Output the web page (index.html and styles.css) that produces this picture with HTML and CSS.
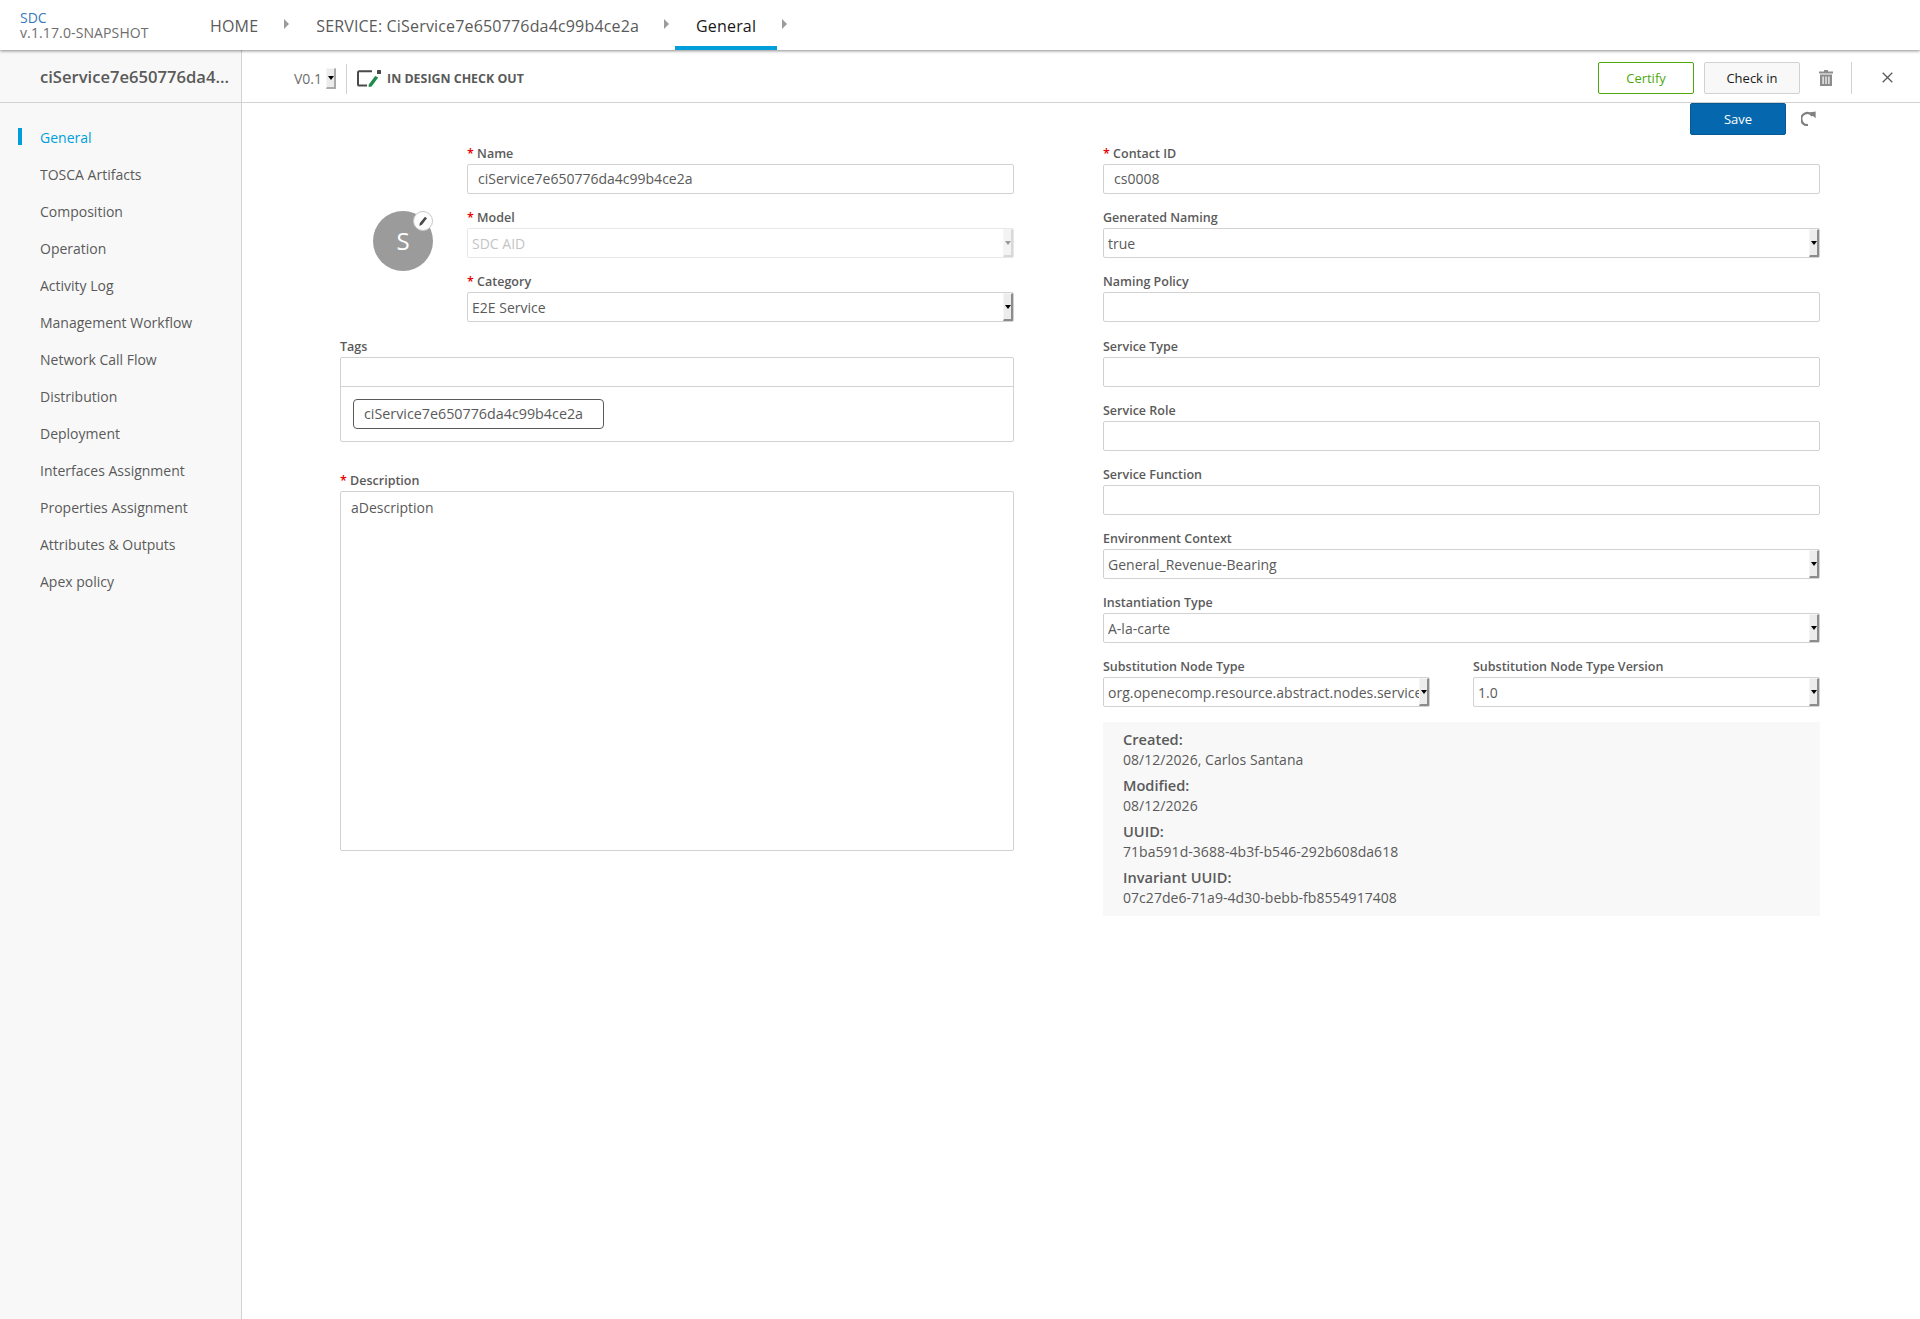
FILE: index.html
```html
<!DOCTYPE html>
<html lang="en">
<head>
<meta charset="utf-8">
<title>SDC</title>
<link rel="stylesheet" href="styles.css">
</head>
<body>
<header class="topbar">
  <div class="brand">
    <div class="brand-name">SDC</div>
    <div class="brand-version">v.1.17.0-SNAPSHOT</div>
  </div>
  <nav class="crumbs">
    <a class="crumb crumb-home">HOME</a><span class="caret caret-home"></span>
    <a class="crumb crumb-service">SERVICE: CiService7e650776da4c99b4ce2a</a><span class="caret caret-service"></span>
    <a class="crumb crumb-active">General</a><span class="caret caret-active"></span>
  </nav>
</header>
<div class="shell">
  <aside class="sidebar">
    <div class="side-title">ciService7e650776da4...</div>
    <ul class="side-menu">
      <li class="side-item active">General</li>
      <li class="side-item">TOSCA Artifacts</li>
      <li class="side-item">Composition</li>
      <li class="side-item">Operation</li>
      <li class="side-item">Activity Log</li>
      <li class="side-item">Management Workflow</li>
      <li class="side-item">Network Call Flow</li>
      <li class="side-item">Distribution</li>
      <li class="side-item">Deployment</li>
      <li class="side-item">Interfaces Assignment</li>
      <li class="side-item">Properties Assignment</li>
      <li class="side-item">Attributes &amp; Outputs</li>
      <li class="side-item">Apex policy</li>
    </ul>
  </aside>
  <main class="main">
    <div class="toolbar">
      <span class="version">V0.1</span>
      <span class="native-btn version-btn"><i class="tri"></i></span>
      <span class="vline"></span>
      <svg class="state-icon" width="24" height="17" viewBox="0 0 24 17">
        <path d="M15 1.2H2.2a1.2 1.2 0 0 0-1.2 1.2v12a1.2 1.2 0 0 0 1.2 1.2H10" fill="none" stroke="#4a4a4a" stroke-width="2"/>
        <path d="M18.2 6l3 1.4L14.6 16.6l-3 .4.2-2.6z" fill="#1f8a4c"/>
        <rect x="20" y="0" width="4" height="4" rx=".6" fill="#4a4a4a"/>
      </svg>
      <span class="state">IN DESIGN CHECK OUT</span>
      <span class="toolbar-fill"></span>
      <button class="btn btn-certify">Certify</button>
      <button class="btn btn-checkin">Check in</button>
      <svg class="trash" width="14" height="16" viewBox="0 0 14 16">
        <path d="M5 0h4v1.5h5V3.5H0V1.5h5z M1 4.5h12V16H1z M3.5 6.5v7.5h1.2V6.5z M6.4 6.5v7.5h1.2V6.5z M9.3 6.5v7.5h1.2V6.5z" fill="#8c8c8c" fill-rule="evenodd"/>
      </svg>
      <span class="vline vline-right"></span>
      <svg class="close" width="11" height="11" viewBox="0 0 11 11">
        <path d="M.7.7l9.6 9.6M10.3.7L.7 10.3" stroke="#5a5a5a" stroke-width="1.3" fill="none"/>
      </svg>
    </div>
    <div class="actions">
      <button class="btn btn-save">Save</button>
      <svg class="redo" width="15" height="15" viewBox="0 0 15 15">
        <path d="M11.5 5A6 6 0 1 0 7 14" fill="none" stroke="#808080" stroke-width="2.3"/>
        <path d="M8 1.4L14.6.6v6.6z" fill="#808080"/>
      </svg>
    </div>
    <div class="form">
      <section class="col col-left">
        <div class="identity">
          <div class="avatar">S
            <span class="avatar-edit">
              <svg width="10" height="10" viewBox="0 0 10 10"><path d="M7 .8l2 1.4-5 6.6-2.6 1.1.4-2.8z" fill="#4a4a4a"/></svg>
            </span>
          </div>
          <div class="identity-fields">
            <div class="field"><label class="lbl"><b class="req">*</b> Name</label><div class="input input-text">ciService7e650776da4c99b4ce2a</div></div>
            <div class="field"><label class="lbl"><b class="req">*</b> Model</label><div class="input select disabled"><span class="select-text">SDC AID</span><span class="native-btn"><i class="tri"></i></span></div></div>
            <div class="field"><label class="lbl"><b class="req">*</b> Category</label><div class="input select"><span class="select-text">E2E Service</span><span class="native-btn"><i class="tri"></i></span></div></div>
          </div>
        </div>
        <div class="tags-field">
          <label class="lbl">Tags</label>
          <div class="tags-box">
            <div class="tags-input"></div>
            <div class="tags-list"><span class="tag">ciService7e650776da4c99b4ce2a</span></div>
          </div>
        </div>
        <div class="desc-field">
          <label class="lbl"><b class="req">*</b> Description</label>
          <div class="textarea">aDescription</div>
        </div>
      </section>
      <section class="col col-right">
        <div class="field"><label class="lbl"><b class="req">*</b> Contact ID</label><div class="input input-text">cs0008</div></div>
        <div class="field"><label class="lbl">Generated Naming</label><div class="input select"><span class="select-text">true</span><span class="native-btn"><i class="tri"></i></span></div></div>
        <div class="field field-gap"><label class="lbl">Naming Policy</label><div class="input input-text"></div></div>
        <div class="field"><label class="lbl">Service Type</label><div class="input input-text"></div></div>
        <div class="field"><label class="lbl">Service Role</label><div class="input input-text"></div></div>
        <div class="field"><label class="lbl">Service Function</label><div class="input input-text"></div></div>
        <div class="field"><label class="lbl">Environment Context</label><div class="input select"><span class="select-text">General_Revenue-Bearing</span><span class="native-btn"><i class="tri"></i></span></div></div>
        <div class="field"><label class="lbl">Instantiation Type</label><div class="input select"><span class="select-text">A-la-carte</span><span class="native-btn"><i class="tri"></i></span></div></div>
        <div class="field-row">
          <div class="field subst"><label class="lbl">Substitution Node Type</label><div class="input select"><span class="select-text">org.openecomp.resource.abstract.nodes.service</span><span class="native-btn"><i class="tri"></i></span></div></div>
          <div class="field subst-ver"><label class="lbl">Substitution Node Type Version</label><div class="input select"><span class="select-text">1.0</span><span class="native-btn"><i class="tri"></i></span></div></div>
        </div>
        <dl class="meta">
          <dt>Created:</dt><dd>08/12/2026, Carlos Santana</dd>
          <dt>Modified:</dt><dd>08/12/2026</dd>
          <dt>UUID:</dt><dd>71ba591d-3688-4b3f-b546-292b608da618</dd>
          <dt>Invariant UUID:</dt><dd>07c27de6-71a9-4d30-bebb-fb8554917408</dd>
        </dl>
      </section>
    </div>
  </main>
</div>
</body>
</html>
```
FILE: styles.css
```css
* { box-sizing: border-box; }
html, body { margin: 0; height: 100%; }
body {
  font-family: "Open Sans", sans-serif;
  font-size: 14px;
  color: #5a5a5a;
  background: #fff;
  display: flex;
  flex-direction: column;
  height: 1319px;
  overflow: hidden;
}

/* top bar */
.topbar {
  flex: 0 0 50px;
  height: 50px;
  display: flex;
  align-items: stretch;
  background: #fff;
  box-shadow: 0 1px 3px rgba(0, 0, 0, .45);
  position: relative;
  z-index: 2;
}
.brand { width: 210px; padding: 10px 0 0 20px; font-size: 14px; line-height: 15px; }
.brand-name { color: #3a7ab8; }
.brand-version { color: #6e6e6e; white-space: nowrap; letter-spacing: .12px; }
.crumbs { display: flex; align-items: stretch; }
.crumb { display: block; font-size: 16px; line-height: 52px; color: #5a5a5a; white-space: nowrap; height: 50px; letter-spacing: .17px; }
.crumb-active { color: #191919; width: 102px; text-align: center; border-bottom: 4px solid #009fdb; margin-left: 6px; }
.caret {
  width: 0; height: 0; align-self: flex-start; margin-top: 19px;
  border-left: 5px solid #9b9b9b; border-top: 5px solid transparent; border-bottom: 5px solid transparent;
}
.caret-home { margin-left: 26px; }
.crumb-service { margin-left: 27px; }
.caret-service { margin-left: 25px; }
.caret-active { margin-left: 5px; }

/* shell */
.shell { flex: 1; display: flex; min-height: 0; }
.sidebar { flex: 0 0 242px; width: 242px; min-width: 0; background: #f8f8f8; border-right: 1px solid #d2d2d2; }
.side-title {
  height: 53px; padding: 0 0 0 40px; line-height: 53px;
  font-size: 16.6px; font-weight: 600; color: #5a5a5a;
  border-bottom: 1px solid #d2d2d2; white-space: nowrap;
}
.side-menu { list-style: none; margin: 0; padding: 16px 0 0; }
.side-item { height: 37px; line-height: 37px; padding-left: 40px; font-size: 14px; color: #5a5a5a; position: relative; }
.side-item.active { color: #009fdb; }
.side-item.active::before { content: ""; position: absolute; left: 18px; top: 9px; width: 4px; height: 17px; background: #009fdb; }

.main { flex: 1; min-width: 0; }
.toolbar {
  height: 53px; display: flex; align-items: center; padding: 3px 0 0 52px;
  border-bottom: 1px solid #d2d2d2;
}
.version { font-size: 14px; color: #6e6e6e; margin-top: 1px; }
.version-btn { height: 21px; margin-left: 4px; margin-top: 1px; }
.vline { width: 1px; height: 30px; background: #d2d2d2; margin-left: 10px; margin-top: 2px; }
.state-icon { margin-left: 10px; margin-top: 2px; flex: none; }
.state { margin-left: 6px; margin-top: 2px; font-size: 12.4px; font-weight: 700; color: #5a5a5a; white-space: nowrap; }
.toolbar-fill { flex: 1; }
.btn {
  font-family: inherit; font-size: 13px; font-weight: 400; height: 32px; width: 96px;
  border-radius: 2px; padding: 0; display: block;
}
.btn-certify { background: #fff; color: #4ca90c; border: 1px solid #4ca90c; }
.btn-checkin { background: #f8f8f8; color: #191919; border: 1px solid #d2d2d2; margin-left: 10px; }
.trash { margin-left: 19px; flex: none; }
.vline-right { margin-left: 18px; margin-top: 0; height: 32px; }
.close { margin-left: 30px; margin-right: 27px; flex: none; }
.actions { display: flex; justify-content: flex-end; align-items: center; height: 32px; padding-right: 104px; }
.btn-save { background: #0568ae; color: #fff; border: 1px solid #055a96; }
.redo { margin-left: 15px; margin-bottom: 1px; flex: none; }

/* form */
.form { display: flex; padding: 0 0 0 98px; margin-top: 7px; }
.col-left { width: 674px; }
.col-right { width: 717px; margin-left: 89px; }
.identity { display: flex; }
.avatar {
  width: 60px; height: 60px; border-radius: 50%; background: #9b9b9b; color: #fff;
  font-size: 24px; line-height: 60px; text-align: center; margin: 69px 34px 0 33px; position: relative; flex: none;
}
.avatar-edit {
  position: absolute; right: 0; top: 0; width: 20px; height: 20px; border-radius: 50%;
  background: #fff; border: 1px solid #c8c8c8; display: flex; align-items: center; justify-content: center;
}
.identity-fields { flex: 1; }
.field { height: 64px; }
.field-gap { height: 65px; }
.lbl { display: block; height: 22px; font-size: 12.5px; font-weight: 600; line-height: 24px; color: #5a5a5a; white-space: nowrap; }
.req { color: #e60000; font-weight: 600; }
.input { height: 30px; border: 1px solid #d2d2d2; border-radius: 2px; background: #fff; font-size: 14px; line-height: 28px; color: #5a5a5a; white-space: nowrap; overflow: hidden; }
.input-text { padding-left: 10px; }
.select { display: flex; padding-left: 4px; line-height: 30px; }
.select-text { flex: 1; min-width: 0; overflow: hidden; }
.select.disabled { border-color: #e8e8e8; color: #c4c4c4; }
.native-btn {
  flex: none; width: 10px; display: flex; align-items: center; justify-content: center;
  background: #ececec; border-top: 1px solid #f5f5f5; border-left: 1px solid #f5f5f5;
  border-right: 2px solid #8c8c8c; border-bottom: 2px solid #8c8c8c;
}
.version-btn { border-color: #f5f5f5 #aaa #aaa #f5f5f5; }
.disabled .native-btn { background: #f3f3f3; border-right-color: #d8d8d8; border-bottom-color: #d8d8d8; }
.tri { width: 0; height: 0; border-left: 3.5px solid transparent; border-right: 3.5px solid transparent; border-top: 4px solid #000; }
.disabled .tri { border-top-color: #9a9a9a; }

.tags-field { margin-top: 1px; }
.tags-box { border: 1px solid #d2d2d2; border-radius: 2px; height: 85px; }
.tags-input { height: 29px; border-bottom: 1px solid #d2d2d2; }
.tags-list { padding: 12px 0 0 12px; }
.tag { display: block; width: 251px; height: 30px; border: 1px solid #5a5a5a; border-radius: 4px; padding-left: 10px; line-height: 28px; font-size: 14.3px; }
.desc-field { margin-top: 27px; }
.textarea { height: 360px; border: 1px solid #d2d2d2; border-radius: 2px; padding: 6px 10px; font-size: 14px; line-height: 20px; }

.field-row { display: flex; gap: 43px; }
.subst { width: 327px; }
.subst-ver { flex: 1; }
.meta { margin: 3px 0 0; background: #f8f8f8; height: 194px; padding: 8px 20px 0; font-size: 14px; color: #5a5a5a; }
.meta dt { font-weight: 600; font-size: 14.6px; height: 20px; line-height: 18px; }
.meta dd { margin: 0 0 6px; height: 20px; line-height: 20px; letter-spacing: .04px; }
```
